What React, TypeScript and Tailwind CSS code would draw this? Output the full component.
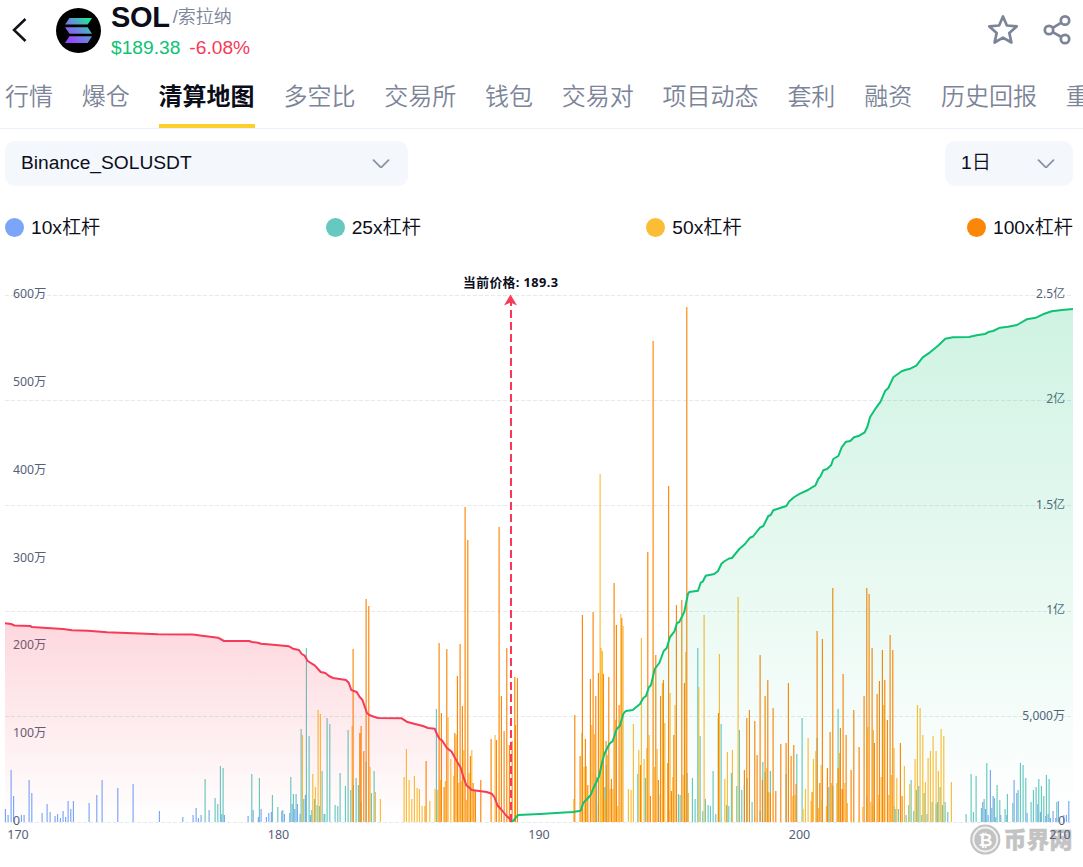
import { useState } from "react";

type Point = [number, number];
type Leverage = "10x" | "25x" | "50x" | "100x";

const BASELINE = 822;

const LEVERAGES: { key: Leverage; color: string; dot: string }[] = [
  { key: "10x", color: "#7aa5f9", dot: "bg-[#7aa5f9]" },
  { key: "25x", color: "#65c9c1", dot: "bg-[#65c9c1]" },
  { key: "50x", color: "#fcbd36", dot: "bg-[#fcbd36]" },
  { key: "100x", color: "#fc8608", dot: "bg-[#fc8608]" }
];

const TABS = ["行情", "爆仓", "清算地图", "多空比", "交易所", "钱包", "交易对", "项目动态", "套利", "融资", "历史回报", "重要事件"];

// "x,top" pairs, every bar stands on the baseline
const BARS: Record<Leverage, string> = {
  "10x": `5.3,809 8,815 11,770 13.5,796 21.3,815 24,815 29,780 31.7,793 42,813 47,804 50,812 55,816 57.5,814 60.3,818 63,811 65.5,817
    68,801 70.7,809 73.3,801 89,803 96.7,795 102,780 117.7,788 133,784 159.3,811 182.7,817 193,815 196,808 198.3,818 201,815 209,810
    221.7,814 224.3,815 248,816 253,810 258.3,817 261,809 266.3,817 268.7,813 271.3,812 281.7,811 284.3,814 289.7,813 292,804
    294.7,809 297.3,804 300,814 305.3,795 310.3,815 324,814 982.7,802 985.3,809 988,815 990.3,770 993,796 995.7,817 1000.7,815
    1006.7,815 1014,780 1016.7,793 1027,813 1037.7,804 1040.3,812 1045.7,816 1048,814 1050.3,818 1053,811 1055.7,818 1058.3,801
    1063.7,815 1066.3,815 1068.7,801`,
  "25x": `205,779 215,798 217.7,804 220.3,766 223,768 251.7,774 259.3,778 272.3,795 277.7,807 282.7,810 290.7,777 293.3,794 296,794
    301,729 303.7,799 306.3,648 309,736 311.7,810 314.3,799 317,805 319.3,806 322,771 324.7,814 327,718 329.7,724 335,805 337.7,806
    340,773 345.3,786 348,730 350.7,790 353.3,785 356,778 358.3,785 361,802 366,762 371.3,793 374,771 436.3,709 596.3,777 598.3,804
    604.7,787 606.3,765 637.7,774 645.3,778 658.7,795 669,810 678.3,794 680,795 687,773 692.3,778 695,799 697.7,648 700,736
    702.7,811 705.3,799 708,805 710.3,806 713,771 715.7,814 718.3,718 721,724 726.3,805 728.7,806 731.3,773 736.7,786 739.3,730
    741.7,790 744.3,785 747,778 752,802 760,811 762.7,762 765,772 767.7,792 770.3,771 786,774 796.7,754 802,718 817,738 822,800
    828.7,787 832.7,786 838,709 867,795 873,805 894.3,806 895.7,809 898.3,809 906,815 908.7,805 911,780 913.7,811 916.3,790
    918.7,786 921.7,815 924,793 927,814 932,802 936,804 937.3,802 940,787 942.3,805 945,802 947.7,812 966,814 971,774 973.3,812
    976,776 981.3,808 984,799 986.7,763 991.7,808 994.3,798 997,785 999.7,800 1005,809 1007.3,794 1012.7,803 1018,790 1020.3,763
    1023,765 1025.7,778 1031,802 1033.3,790 1036,787 1038.7,779 1041.3,786 1043.7,796 1046.3,775 1049,779 1056.7,802`,
  "50x": `302.3,735 312.7,774 315.3,787 318,710 320.3,714 352,726 370,767 375.3,792 380.3,799 404,777 406.3,749 409,780 411.7,799
    414.3,776 417,788 419.3,789 422,806 424.7,806 429.7,801 435,789 437.7,790 440.3,780 445.3,781 448,717 450.7,759 453.7,776
    456,735 458.7,783 461,781 463.7,750 466.3,800 469,773 471.7,750 474,790 495,735 573.7,799 581.7,733 584,767 586.3,766
    591.7,725 594.3,734 600,474 601,648 602.3,651 604.7,799 607.3,755 610,789 612.7,789 615.3,720 617.7,806 620.7,614 623,626
    628.3,789 631,790 633.3,724 638.7,750 641.3,638 644,759 646.7,748 649,735 654.3,767 657,749 662.3,683 664.7,723 670,693
    672.7,777 675,705 683,775 685.7,652 688.3,793 698.7,687 704,615 719.3,654 724.7,779 727.3,752 732.3,750 738,597 766.7,768
    768.7,792 792.7,796 795,795 803,809 805.3,789 808,738 811,801 813.3,759 815.7,751 818.3,808 821,765 826.3,806 831.3,783
    836.7,783 839.3,753 844.7,783 847.3,803 862.7,807 867.7,727 870.7,802 873.3,730 878.7,795 881,777 883.7,705 888.7,795
    891.3,775 894,748 896.7,778 904.3,766 909.7,784 915,759 917.3,705 920,708 922.7,735 925.3,782 928,758 930.3,751 933,736
    936,751 938.3,771 941,729 943.7,736 951.3,782`,
  "100x": `353,649 359.7,733 361,726 363.7,751 366,599 368.7,606 426,761 439,643 441.3,713 444,787 446.7,649 454.7,733 457.3,676
    460,644 462.3,706 465,507 467.7,540 470.3,756 473,783 475.3,790 480.7,780 491,739 496.3,740 499,527 501.3,696 504,731
    506.7,648 509.3,745 512,741 514.7,677 515.3,725 517.3,678 574.7,715 580,756 582.3,615 585.3,739 587.7,785 590.3,679 593,612
    595.7,696 598.3,673 603.3,674 606,741 608.7,677 611.3,779 614,583 616.3,625 619,705 621.7,618 640.3,765 647.7,552 650.3,796
    653,341 655.7,655 658.3,780 660.5,696 663.3,680 667.7,763 668.5,486 671.3,791 673.7,735 676.3,605 681.7,600 684.3,683
    686.7,307 718.3,713 744.3,770 746.7,718 749.3,710 754.7,721 757,755 760,655 762.3,780 765,696 767.7,680 770.3,793 773,708
    775.7,791 780.7,744 786,743 788.3,683 791,756 793.7,745 796,784 812,792 817,631 819.7,783 822.3,639 827.3,768 830,732
    832.7,588 838,768 840.3,728 842,789 843,674 846,735 851,770 853.7,710 859,747 864,696 866.7,588 869,594 872,648 874.3,743
    877,694 879.3,681 882.3,650 884.7,680 887.3,720 890,635 892.7,650 900.3,743 902,796`
};

const LONG_LINE = `5,623.3 11,624 14.5,625.5 23,625.8 30,626 32,627 47,628 63,629 72,630.3 88,630.8 107,632.3 133,633.3 158,634.3 193,634.5
  202,635.7 218,637.7 224,641 249,641 252,642 258,642.7 261,643.7 273,644.7 289,646.3 293,648.7 299,650 301.7,654 304.7,655.7
  307.7,661 315,665.7 320.7,672 325.3,673 329,676 333,678 346,680 348.7,682.7 351.3,690 356.7,692 359.7,697 362.3,699.7 367,713
  369.3,715 374,716.7 378,718 401.7,718.3 406.7,721.7 415,724 423,726 428,728 434.7,728.7 437.3,735 439.7,739 442.3,740.7
  446.7,747.7 451.7,751.7 455,758 460.7,767.7 463.3,776.7 466.3,785 471.7,790 486.7,792 491.7,793.7 494.3,797 497.7,805.7
  501.7,810 505.7,815 511,820`;

const SHORT_LINE = `511,821.5 513.3,820.7 518,815 540,814 560,812.7 573,812 580.7,810.7 583.3,803 590.7,795 594,786.7 599,776.7 602,762.7
  604.3,754 609.3,744 612.7,741 616.7,729 619.7,726 623.3,714 625.7,711 632.7,710 640,704 643.3,698 646,696 648.7,687.7 651,685
  654.7,669 659.3,663 663.7,651 666.7,648 670,637 674.3,631.7 677,623 679.3,622 684.3,611.7 688,593.7 689.3,592 698,590.7
  700.7,582.7 702.7,581.7 705.7,575.7 714.3,574 718,571 721.3,564 724,561.5 729,558.5 732,558 739.3,549 745,544 750,537.7
  753,536.5 760,527.7 763.3,526 768.3,516 770.7,515 773.3,510.3 786.3,506 789.3,501.3 794.3,497 800,493.7 808,490 812,487.3
  815.3,485.7 818.3,479 820.3,476.7 823.3,470.3 827,469 831,465.3 833.3,459 838.3,456 841.7,447.3 846,441.7 850.3,441
  854,437.3 859.3,435.7 864.7,432.3 867.3,427 870,417.3 875.7,408.3 880.7,401.3 885.3,390.7 888.3,388 893.3,377.3 901.7,371.3
  906,369.7 910.3,368.7 916.3,365.7 922.7,357.3 930,352.3 938,345.7 945.3,338.7 953,337.3 969,337 976.7,335.3 985,334
  989.3,331.7 993,331 1000,327.7 1008,326.7 1017,325 1026.7,319.3 1036,317.7 1043,314.3 1051.7,311.3 1062,310 1073,309`;

const GRID_LINES = [295.5, 400.5, 505.5, 611.5, 716.5, 822.5];

const LEFT_AXIS = [
  { label: "600万", y: 298 },
  { label: "500万", y: 386 },
  { label: "400万", y: 474 },
  { label: "300万", y: 562 },
  { label: "200万", y: 649 },
  { label: "100万", y: 737 },
  { label: "0", y: 825 }
];

const RIGHT_AXIS = [
  { label: "2.5亿", y: 298 },
  { label: "2亿", y: 403 },
  { label: "1.5亿", y: 509 },
  { label: "1亿", y: 614 },
  { label: "5,000万", y: 720 },
  { label: "0", y: 825 }
];

const X_AXIS = [
  { label: "170", x: 18 },
  { label: "180", x: 278.5 },
  { label: "190", x: 539 },
  { label: "200", x: 799.5 },
  { label: "210", x: 1060 }
];

function parsePoints(source: string): Point[] {
  return source.trim().split(/\s+/).map((pair) => pair.split(",").map(Number) as Point);
}

function areaPath(source: string) {
  const points = parsePoints(source);
  const first = points[0];
  const last = points[points.length - 1];
  return `M${first[0]},${BASELINE} L${points.map((point) => point.join(",")).join(" L")} L${last[0]},${BASELINE} Z`;
}

function barsPath(source: string) {
  return parsePoints(source).map(([x, top]) => `M${x + 0.1},${BASELINE}V${top}`).join("");
}

function SolanaLogo() {
  return (
    <svg className="size-[45px] shrink-0" viewBox="0 0 45 45" aria-hidden="true">
      <defs>
        <linearGradient id="solana" gradientUnits="userSpaceOnUse" x1="11" y1="35" x2="34" y2="10">
          <stop offset="0.1" stopColor="#9945ff" />
          <stop offset="0.5" stopColor="#6b86dc" />
          <stop offset="1" stopColor="#14f195" />
        </linearGradient>
      </defs>
      <circle cx="22.5" cy="22.5" r="22.5" fill="#000" />
      <g fill="url(#solana)">
        <path d="M13.500 10H36l-4.300 6.500H9z" />
        <path d="M9 19.300h22.700L36 25.800H13.500z" />
        <path d="M13.500 28.300H36L31.700 35H9z" />
      </g>
    </svg>
  );
}

function Chevron() {
  return (
    <svg className="h-[10px] w-[18px]" viewBox="0 0 18 10" fill="none" stroke="#8a93a6" strokeWidth="1.8" strokeLinecap="round" strokeLinejoin="round">
      <path d="M1.500 1.200 8 7.700q1 .8 2 0l6.500-6.500" />
    </svg>
  );
}

function Header() {
  return (
    <header className="flex h-[65px] items-start pl-[11px] pr-[11px]">
      <button className="mt-[17px] flex h-[26px] w-[17px] items-center" aria-label="返回">
        <svg className="h-[26px] w-[17px]" viewBox="0 0 17 26" fill="none" stroke="#111318" strokeWidth="2.5">
          <path d="M14.500 2 3 13l11.500 11" />
        </svg>
      </button>
      <div className="ml-7 mt-2"><SolanaLogo /></div>
      <div className="ml-[10px]">
        <div className="flex h-[35px] items-center text-[#0b0e1a]">
          <span className="text-[29px] font-bold tracking-[-0.3px]">SOL</span>
          <span className="ml-[3px] text-[18px] font-[350] text-[#7c8498]">/索拉纳</span>
        </div>
        <div className="flex h-[26px] items-center gap-[9px] text-[19.2px]">
          <span className="text-[#0fc274]">$189.38</span>
          <span className="text-[#f53b57]">-6.08%</span>
        </div>
      </div>
      <div className="ml-auto flex items-center gap-6 pt-[14px] text-[#7c8498]">
        <svg className="size-8" viewBox="0 0 32 32" fill="none" stroke="currentColor" strokeWidth="2.700" strokeLinejoin="round">
          <path d="m16 2.500 3.900 9 9.800.9-7.400 6.500 2.100 9.600L16 23.600l-8.400 4.900 2.100-9.600-7.400-6.500 9.800-.9z" />
        </svg>
        <svg className="h-8 w-[29px]" viewBox="0 0 29 32" fill="none" stroke="currentColor" strokeWidth="2.700">
          <circle cx="6" cy="16" r="4.200" />
          <circle cx="22" cy="6.500" r="4.200" />
          <circle cx="22" cy="25" r="4.200" />
          <path d="m9.700 13.900 8.700-5.200M9.700 18.100l8.700 4.900" />
        </svg>
      </div>
    </header>
  );
}

function Tabs() {
  const [active, setActive] = useState("清算地图");
  return (
    <nav className="flex h-16 gap-[28.8px] overflow-hidden border-b border-[#eceff5] pl-[5px]">
      {TABS.map((tab) => (
        <button
          key={tab}
          onClick={() => setActive(tab)}
          className={
            tab === active
              ? "h-[63px] shrink-0 whitespace-nowrap border-b-4 border-[#fbd02d] pt-1 text-[24px] leading-[52px] font-bold text-[#0b0e1a]"
              : "h-[63px] shrink-0 whitespace-nowrap border-b-4 border-transparent pt-1 text-[24px] leading-[52px] font-[350] text-[#7c8498]"
          }
        >
          {tab}
        </button>
      ))}
    </nav>
  );
}

function Filters() {
  return (
    <div className="mt-3 flex justify-between pl-[5px] pr-[10px] text-[19.2px] font-[350] text-[#0b0e1a]">
      <button className="flex h-[45px] w-[403px] items-center justify-between rounded-[10px] bg-[#f4f7fc] pl-4 pr-[18px]">
        Binance_SOLUSDT
        <Chevron />
      </button>
      <button className="flex h-[45px] w-32 items-center justify-between rounded-[10px] bg-[#f4f7fc] pl-4 pr-[18px]">
        <span>1日</span>
        <Chevron />
      </button>
    </div>
  );
}

function Legend() {
  return (
    <div className="mt-[27px] flex h-[29px] items-center justify-between pl-[5px] pr-[10px] text-[19.2px] font-[350] text-[#0b0e1a]">
      {LEVERAGES.map(({ key, dot }) => (
        <div key={key} className="flex items-center gap-[7px]">
          <span className={`size-[19px] rounded-full ${dot}`} />
          <span className="pt-[2px]">{key}杠杆</span>
        </div>
      ))}
    </div>
  );
}

function Watermark() {
  return (
    <g fill="#c3c3c3">
      <circle cx="985.300" cy="839.500" r="14" fill="#f3f3f3" stroke="#c3c3c3" strokeWidth="2.200" />
      <circle cx="985.300" cy="839.500" r="11" />
      <text
        x="985.500"
        y="846"
        fontSize="17"
        fontWeight="700"
        fill="#fff"
        textAnchor="middle"
        className="[font-family:'DejaVu_Sans',sans-serif]"
      >
        ₿
      </text>
      <text x="1003.500" y="847.500" fontSize="23" fontWeight="900" stroke="#c3c3c3" strokeWidth="0.300">币界网</text>
    </g>
  );
}

function LiquidationChart() {
  return (
    <svg
      viewBox="0 242 1083 625"
      className="block h-[625px] w-full [font-family:'Noto_Sans','Noto_Sans_CJK_SC',sans-serif]"
      role="img"
      aria-label="SOL 清算地图"
    >
      <defs>
        <linearGradient id="longFill" gradientUnits="userSpaceOnUse" x1="0" y1="623" x2="0" y2={BASELINE}>
          <stop offset="0" stopColor="#f53b57" stopOpacity="0.2" />
          <stop offset="1" stopColor="#f53b57" stopOpacity="0" />
        </linearGradient>
        <linearGradient id="shortFill" gradientUnits="userSpaceOnUse" x1="0" y1="309" x2="0" y2={BASELINE}>
          <stop offset="0" stopColor="#0fc274" stopOpacity="0.2" />
          <stop offset="1" stopColor="#0fc274" stopOpacity="0" />
        </linearGradient>
      </defs>

      <g stroke="#e7e9ed" strokeDasharray="4 2">
        {GRID_LINES.map((y) => <line key={y} x1="5" x2="1073" y1={y} y2={y} />)}
      </g>

      <g fill="none" strokeWidth="1.15">
        {LEVERAGES.map(({ key, color }) => <path key={key} d={barsPath(BARS[key])} stroke={color} />)}
      </g>

      <Watermark />

      <g fill="#56607a" fontSize="12">
        {LEFT_AXIS.map(({ label, y }) => <text key={y} x="13" y={y} fontSize="12.3">{label}</text>)}
        {RIGHT_AXIS.map(({ label, y }) => <text key={y} x="1065" y={y} textAnchor="end">{label}</text>)}
        {X_AXIS.map(({ label, x }) => <text key={label} x={x} y="839" fontSize="12.5" textAnchor="middle">{label}</text>)}
      </g>

      <path d={areaPath(LONG_LINE)} fill="url(#longFill)" />
      <path d={areaPath(SHORT_LINE)} fill="url(#shortFill)" />
      <polyline points={LONG_LINE} fill="none" stroke="#f53b57" strokeWidth="2" strokeLinejoin="round" />
      <polyline points={SHORT_LINE} fill="none" stroke="#0fc274" strokeWidth="2" strokeLinejoin="round" />

      <line x1="511" x2="511" y1="822" y2="300" stroke="#f53b57" strokeWidth="2" strokeDasharray="8 4" />
      <path d="M510.500 294.500 517 305.500 510.500 302.500 504 305.500z" fill="#f53b57" />
      <text x="510.500" y="287" textAnchor="middle" fontSize="12.800" fontWeight="700" textLength="95" fill="#0b0e1a">当前价格: 189.3</text>
    </svg>
  );
}

export default function App() {
  return (
    <div className="h-[867px] w-[1083px] overflow-hidden bg-white [font-family:'Liberation_Sans','Noto_Sans_CJK_SC',sans-serif]">
      <Header />
      <Tabs />
      <Filters />
      <Legend />
      <LiquidationChart />
    </div>
  );
}
